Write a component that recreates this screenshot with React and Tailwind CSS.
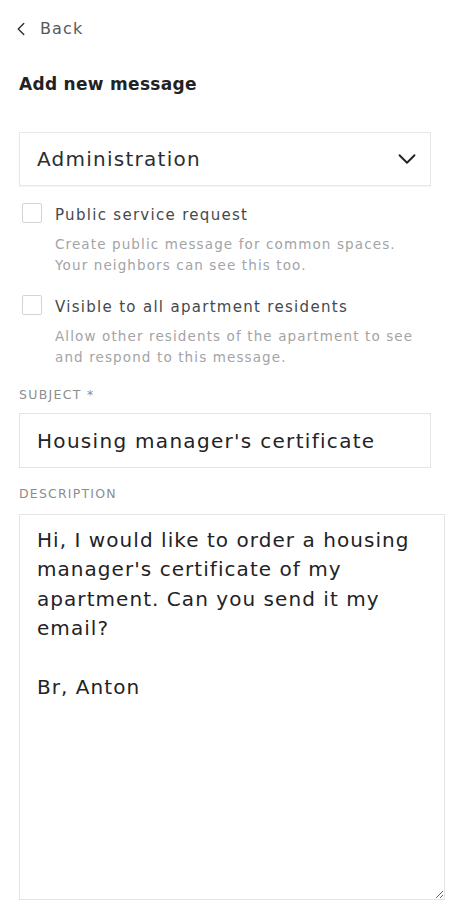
import React, { useState } from 'react';
import { ChevronLeft, ChevronDown } from 'lucide-react';

const font = { fontFamily: '"DejaVu Sans", "Liberation Sans", sans-serif' };

function Check({ label, hint, checked, onChange }) {
  return (
    <label className="flex gap-[13px] cursor-pointer">
      <span
        onClick={onChange}
        className={`-mt-[1px] h-[20px] w-[20px] shrink-0 border ${checked ? 'border-gray-700 bg-gray-700' : 'border-[#d2d3d4] bg-white'} rounded-[2px]`}
      />
      <span className="flex flex-col">
        <span className="text-[15px] leading-[22px] tracking-[1.3px] text-[#45494c]">{label}</span>
        <span className="mt-[8px] text-[13.5px] leading-[21px] tracking-[1.12px] text-[#a2a4a6]">{hint}</span>
      </span>
    </label>
  );
}

export default function App() {
  const [pub, setPub] = useState(false);
  const [vis, setVis] = useState(false);
  const [subject, setSubject] = useState("Housing manager's certificate");
  const [desc, setDesc] = useState(
    "Hi, I would like to order a housing manager's certificate of my apartment. Can you send it my email?\n\nBr, Anton"
  );

  return (
    <div className="min-h-[900px] w-[450px] bg-white text-[#1f2326]" style={font}>
      <div className="pl-[19px] pr-[6px] pt-[18px]">
        <button className="flex items-center gap-[8px] text-[#55595c]">
          <ChevronLeft size={22} strokeWidth={1.5} className="-ml-[9px] text-[#2a2e31]" />
          <span className="text-[16px] leading-[22px] tracking-[1.1px]">Back</span>
        </button>

        <h1 className="mt-[32px] text-[17px] font-bold leading-[24px] tracking-[0.3px] text-[#1f2326]">Add new message</h1>

        <div className="mt-[36px] mr-[13px] flex h-[54px] items-center justify-between border border-[#e6e7e8] pl-[17px] pr-[8px] shadow-[0_1px_1px_rgba(0,0,0,0.04)]">
          <span className="text-[20px] tracking-[1.25px] text-[#2a2e31]">Administration</span>
          <ChevronDown size={30} strokeWidth={1.5} className="text-[#1f2326]" />
        </div>

        <div className="mt-[18px] flex flex-col gap-[20px] pl-[3px]">
          <Check
            label="Public service request"
            hint={<>Create public message for common spaces.<br />Your neighbors can see this too.</>}
            checked={pub}
            onChange={() => setPub(!pub)}
          />
          <Check
            label="Visible to all apartment residents"
            hint={<>Allow other residents of the apartment to see<br />and respond to this message.</>}
            checked={vis}
            onChange={() => setVis(!vis)}
          />
        </div>

        <div className="mt-[19px] text-[12.5px] leading-[16px] tracking-[1.3px] text-[#8b8e90]">SUBJECT *</div>
        <input
          value={subject}
          onChange={(e) => setSubject(e.target.value)}
          className="mt-[10px] mr-[13px] block h-[55px] w-[412px] border border-[#e3e4e5] pl-[17px] text-[20px] tracking-[1.3px] text-[#1f2326] outline-none"
        />

        <div className="mt-[18px] text-[12.5px] leading-[16px] tracking-[1.2px] text-[#8b8e90]">DESCRIPTION</div>
        <textarea
          value={desc}
          onChange={(e) => setDesc(e.target.value)}
          className="mt-[12px] block h-[386px] w-[426px] border border-[#e3e4e5] px-[17px] pt-[11px] text-[20px] leading-[29.4px] tracking-[1.05px] text-[#1f2326] outline-none"
        />
      </div>
    </div>
  );
}
